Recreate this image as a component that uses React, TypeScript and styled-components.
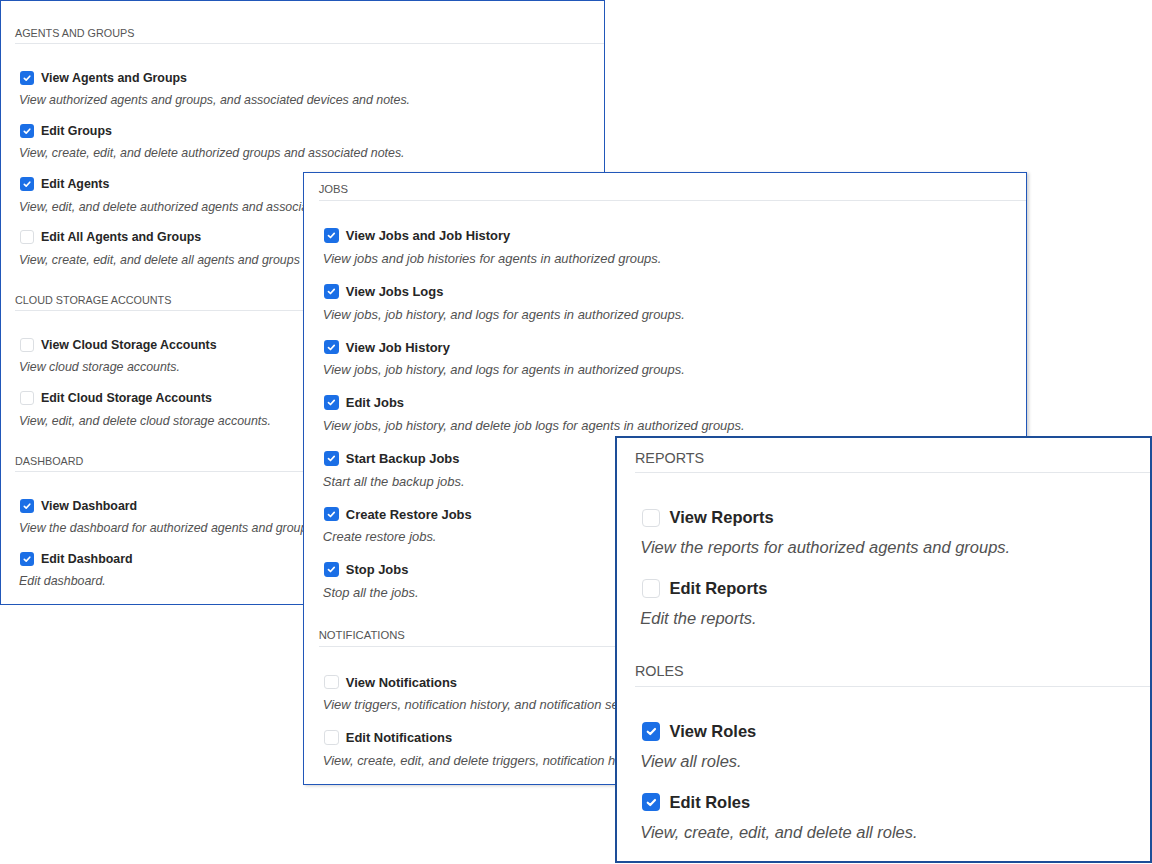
import React from 'react'
import styled, { createGlobalStyle } from 'styled-components'

type Permission = {
  label: string,
  desc: string,
  on: boolean
}

type Group = {
  title: string,
  items: Permission[]
}

type PanelProps = {
  $x: number,
  $y: number,
  $w: number,
  $h: number,
  $s: number,
  $top: number,
  $border: string,
  $bw: number,
  $shadow?: boolean
}

const GlobalStyle = createGlobalStyle`
  html, body {
    margin: 0;
    padding: 0;
    background: #fff;
  }
  body {
    font-family: "Liberation Sans", Arial, Helvetica, sans-serif;
  }
`

const Desktop = styled.main`
  position: relative;
  width: 1152px;
  height: 864px;
  overflow: hidden;
  background: #fff;
`
const Panel = styled.section<PanelProps>`
  --s: ${p => p.$s};
  position: absolute;
  left: ${p => p.$x}px;
  top: ${p => p.$y}px;
  width: ${p => p.$w}px;
  height: ${p => p.$h}px;
  box-sizing: border-box;
  border: ${p => p.$bw}px solid ${p => p.$border};
  background: #fff;
  overflow: hidden;
  box-shadow: ${p => p.$shadow ? '2px 1px 3px rgba(0, 0, 0, 0.18)' : 'none'};
  padding: ${p => p.$top}px 0 0 calc(15px * var(--s) - ${p => p.$bw}px);
  display: flex;
  flex-direction: column;
  gap: calc(27.5px * var(--s));
`
const Section = styled.div`
  display: flex;
  flex-direction: column;
`
const SectionTitle = styled.h3`
  margin: 0;
  font-size: calc(10.8px * var(--s));
  line-height: calc(12px * var(--s));
  font-weight: 400;
  color: #555;
  text-transform: uppercase;
  white-space: nowrap;
  padding-bottom: calc(4px * var(--s));
  border-bottom: calc(1.5px * var(--s)) solid #e4e7eb;
`
const ItemList = styled.div`
  display: flex;
  flex-direction: column;
  gap: calc(15.8px * var(--s));
  margin-top: calc(25.5px * var(--s));
`
const Item = styled.div`
  display: flex;
  flex-direction: column;
  gap: calc(7.5px * var(--s));
`
const ItemHead = styled.label`
  display: flex;
  align-items: center;
  height: calc(16px * var(--s));
  padding-left: calc(5px * var(--s));
  gap: calc(7px * var(--s));
  font-size: calc(12.4px * var(--s));
  font-weight: 700;
  color: #262626;
  white-space: nowrap;
`
const Box = styled.span<{ $on: boolean }>`
  flex: none;
  width: calc(14px * var(--s));
  height: calc(14px * var(--s));
  box-sizing: border-box;
  border-radius: calc(3px * var(--s));
  background: ${p => p.$on ? '#1b6fe6' : '#fff'};
  border: ${p => p.$on ? 'none' : '1px solid #dcdfe3'};
  display: flex;
  align-items: center;
  justify-content: center;

  svg {
    width: 100%;
    height: 100%;
  }
`
const Desc = styled.p`
  margin: 0;
  padding-left: calc(4px * var(--s));
  font-size: calc(12.4px * var(--s));
  line-height: calc(14px * var(--s));
  font-style: italic;
  color: #525252;
  white-space: nowrap;
`

const agents: Group[] = [
  {
    title: 'Agents and Groups',
    items: [
      { label: 'View Agents and Groups', desc: 'View authorized agents and groups, and associated devices and notes.', on: true },
      { label: 'Edit Groups', desc: 'View, create, edit, and delete authorized groups and associated notes.', on: true },
      { label: 'Edit Agents', desc: 'View, edit, and delete authorized agents and associated devices and notes.', on: true },
      { label: 'Edit All Agents and Groups', desc: 'View, create, edit, and delete all agents and groups and associated notes.', on: false }
    ]
  },
  {
    title: 'Cloud Storage Accounts',
    items: [
      { label: 'View Cloud Storage Accounts', desc: 'View cloud storage accounts.', on: false },
      { label: 'Edit Cloud Storage Accounts', desc: 'View, edit, and delete cloud storage accounts.', on: false }
    ]
  },
  {
    title: 'Dashboard',
    items: [
      { label: 'View Dashboard', desc: 'View the dashboard for authorized agents and groups.', on: true },
      { label: 'Edit Dashboard', desc: 'Edit dashboard.', on: true }
    ]
  }
]

const jobs: Group[] = [
  {
    title: 'Jobs',
    items: [
      { label: 'View Jobs and Job History', desc: 'View jobs and job histories for agents in authorized groups.', on: true },
      { label: 'View Jobs Logs', desc: 'View jobs, job history, and logs for agents in authorized groups.', on: true },
      { label: 'View Job History', desc: 'View jobs, job history, and logs for agents in authorized groups.', on: true },
      { label: 'Edit Jobs', desc: 'View jobs, job history, and delete job logs for agents in authorized groups.', on: true },
      { label: 'Start Backup Jobs', desc: 'Start all the backup jobs.', on: true },
      { label: 'Create Restore Jobs', desc: 'Create restore jobs.', on: true },
      { label: 'Stop Jobs', desc: 'Stop all the jobs.', on: true }
    ]
  },
  {
    title: 'Notifications',
    items: [
      { label: 'View Notifications', desc: 'View triggers, notification history, and notification settings.', on: false },
      { label: 'Edit Notifications', desc: 'View, create, edit, and delete triggers, notification history, and notification settings.', on: false }
    ]
  }
]

const reports: Group[] = [
  {
    title: 'Reports',
    items: [
      { label: 'View Reports', desc: 'View the reports for authorized agents and groups.', on: false },
      { label: 'Edit Reports', desc: 'Edit the reports.', on: false }
    ]
  },
  {
    title: 'Roles',
    items: [
      { label: 'View Roles', desc: 'View all roles.', on: true },
      { label: 'Edit Roles', desc: 'View, create, edit, and delete all roles.', on: true }
    ]
  }
]

function Check({ on }: { on: boolean }) {
  return (
    <Box $on={on}>
      {on && (
        <svg viewBox="0 0 14 14">
          <path d="M4.3 7.3 L6.2 9.1 L9.8 5.2" fill="none" stroke="#fff" strokeWidth="1.6" strokeLinecap="round" strokeLinejoin="round" />
        </svg>
      )}
    </Box>
  )
}

function Groups({ groups }: { groups: Group[] }) {
  return (
    <>
      {groups.map(group => (
        <Section key={group.title}>
          <SectionTitle>{group.title}</SectionTitle>
          <ItemList>
            {group.items.map(item => (
              <Item key={item.label}>
                <ItemHead>
                  <Check on={item.on} />
                  {item.label}
                </ItemHead>
                <Desc>{item.desc}</Desc>
              </Item>
            ))}
          </ItemList>
        </Section>
      ))}
    </>
  )
}

function App() {
  return (
    <>
      <GlobalStyle />
      <Desktop>
        <Panel $x={0} $y={0} $w={605} $h={605} $s={1} $top={26} $border="#2157b9" $bw={1}>
          <Groups groups={agents} />
        </Panel>
        <Panel $x={303} $y={172} $w={724} $h={613} $s={1.045} $top={10} $border="#2157b9" $bw={1} $shadow>
          <Groups groups={jobs} />
        </Panel>
        <Panel $x={615} $y={436} $w={537} $h={427} $s={1.33} $top={13} $border="#1d4e98" $bw={2}>
          <Groups groups={reports} />
        </Panel>
      </Desktop>
    </>
  )
}

export default App
